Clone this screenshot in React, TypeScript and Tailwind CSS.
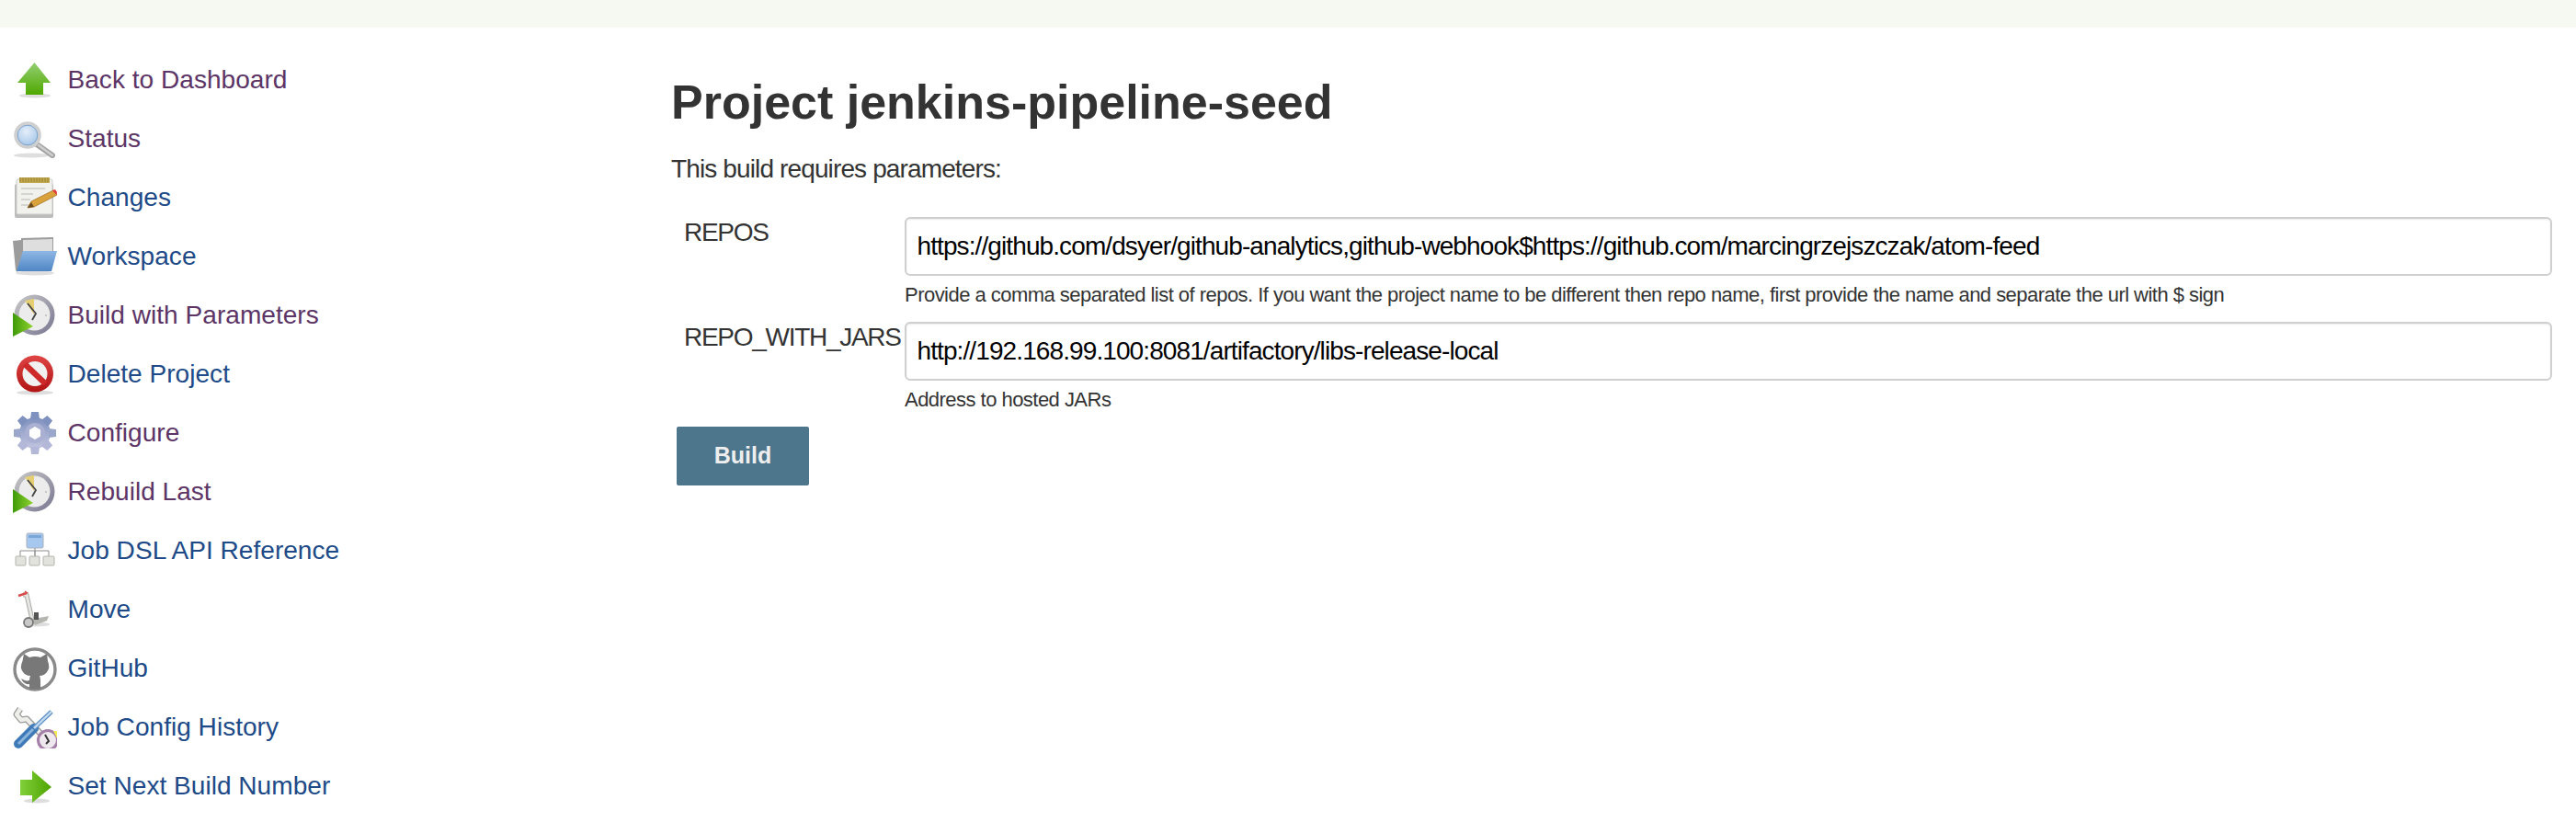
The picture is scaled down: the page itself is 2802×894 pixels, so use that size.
import type { ReactNode } from 'react'

function Shadow({ cx = 24, cy = 44, rx = 17 }: { cx?: number; cy?: number; rx?: number }) {
  return <ellipse cx={cx} cy={cy} rx={rx} ry={2.6} fill="#000" opacity={0.13} />
}

function UpArrow() {
  return (
    <svg viewBox="0 0 48 48" className="size-12">
      <defs>
        <linearGradient id="upg" x1="0" y1="0" x2="0" y2="1">
          <stop offset="0" stopColor="#93cf72" />
          <stop offset="1" stopColor="#50a800" />
        </linearGradient>
      </defs>
      <Shadow cy={42} rx={17} />
      <path d="M23.5 6 L41 28 L33 28 L33 41 L14 41 L14 28 L5 28 Z" fill="url(#upg)" />
    </svg>
  )
}

function Search() {
  return (
    <svg viewBox="0 0 48 48" className="size-12">
      <defs>
        <radialGradient id="lens" cx="0.45" cy="0.35" r="0.7">
          <stop offset="0" stopColor="#e4eef9" />
          <stop offset="1" stopColor="#9cc0e6" />
        </radialGradient>
      </defs>
      <Shadow cx={20} cy={43} rx={19} />
      <line x1="26" y1="31" x2="43" y2="43" stroke="#a3a3a3" strokeWidth="6" strokeLinecap="round" />
      <line x1="28" y1="32" x2="43" y2="43" stroke="#cfcfcf" strokeWidth="2.5" strokeLinecap="round" />
      <circle cx="16" cy="21" r="13" fill="url(#lens)" stroke="#cfcfcf" strokeWidth="3.6" />
      <circle cx="16" cy="21" r="10.8" fill="none" stroke="#7fa3cb" strokeWidth="1" />
    </svg>
  )
}

function Notepad() {
  return (
    <svg viewBox="0 0 48 48" className="size-12">
      <rect x="2" y="10" width="42" height="37" rx="2" fill="#bcbcbc" />
      <rect x="4" y="5" width="39" height="38" rx="1.5" fill="#f1f1ee" stroke="#c9c9c5" />
      <rect x="7" y="3" width="33" height="6" fill="#c2a94e" />
      <path d="M8 3v5M11 3v5M14 3v5M17 3v5M20 3v5M23 3v5M26 3v5M29 3v5M32 3v5M35 3v5M38 3v5" stroke="#8e7a30" strokeWidth="0.8" />
      <path d="M9 15h26M9 21h13M9 27h10M9 33h8" stroke="#d4d4d0" strokeWidth="2" />
      <path d="M16 36 L20 29 L44 17 L48 22 L23 35 Z" fill="#d9a23a" stroke="#a5752a" strokeWidth="0.8" />
      <path d="M43 17 L47.5 22 L48 19 L46 16 Z" fill="#e33c3c" />
      <path d="M16 36 L20 30 L23 35 Z" fill="#6a4a20" />
    </svg>
  )
}

function Folder() {
  return (
    <svg viewBox="0 0 48 48" className="size-12">
      <defs>
        <linearGradient id="fold" x1="0" y1="0" x2="0" y2="1">
          <stop offset="0" stopColor="#8eb7e4" />
          <stop offset="1" stopColor="#4f86c4" />
        </linearGradient>
      </defs>
      <Shadow cy={43} rx={21} />
      <path d="M0 8 L9 7 L9 5 L44 4 L44 22 L10 30 L5 42 L3 40 Z" fill="#9c9c9c" />
      <path d="M11 7 L43 6 L43 20 L11 20 Z" fill="#dedede" />
      <path d="M11 19 L48 19 L42 41 L4 41 Z" fill="url(#fold)" />
    </svg>
  )
}

function BuildClock({ id }: { id: string }) {
  return (
    <svg viewBox="0 0 48 48" className="size-12">
      <defs>
        <linearGradient id={id} x1="0" y1="0" x2="1" y2="0">
          <stop offset="0" stopColor="#3f9a0a" />
          <stop offset="1" stopColor="#8fd32e" />
        </linearGradient>
        <linearGradient id={`${id}-ring`} x1="0" y1="0" x2="1" y2="1">
          <stop offset="0" stopColor="#c9c9c9" />
          <stop offset="1" stopColor="#77758f" />
        </linearGradient>
      </defs>
      <circle cx="23.5" cy="24.5" r="22" fill={`url(#${id}-ring)`} />
      <circle cx="23.5" cy="24.5" r="17" fill="#ececec" />
      <path d="M23 24 L13 9 L23 7 Z" fill="#e6cf72" />
      <path d="M16 12 L25 23 L21 30" fill="none" stroke="#444" strokeWidth="1.8" />
      <circle cx="36" cy="25" r="1" fill="#bbb" />
      <path d="M0 22 L22 37 L0 48 Z" fill={`url(#${id})`} />
    </svg>
  )
}

function NoEntry() {
  return (
    <svg viewBox="0 0 48 48" className="size-12">
      <defs>
        <linearGradient id="red" x1="0" y1="0" x2="0" y2="1">
          <stop offset="0" stopColor="#e04545" />
          <stop offset="1" stopColor="#b01414" />
        </linearGradient>
      </defs>
      <Shadow cy={45} rx={20} />
      <circle cx="24" cy="24.5" r="20" fill="url(#red)" />
      <circle cx="24" cy="24.5" r="13.5" fill="#f1f1f1" />
      <line x1="13" y1="14" x2="35" y2="35" stroke="#cf2a2a" strokeWidth="6.5" />
    </svg>
  )
}

function Gear() {
  const teeth = [0, 45, 90, 135, 180, 225, 270, 315]
  return (
    <svg viewBox="0 0 48 48" className="size-12">
      <defs>
        <linearGradient id="gearg" x1="0" y1="0" x2="0" y2="1">
          <stop offset="0" stopColor="#7d90bd" />
          <stop offset="1" stopColor="#c2c5e0" />
        </linearGradient>
      </defs>
      <g transform="translate(0 1)">
        <circle cx="24" cy="24" r="17" fill="url(#gearg)" />
        {teeth.map((a) => (
          <path
            key={a}
            d="M19 9 L20 1 L28 1 L29 9 Z"
            fill={a > 90 && a < 270 ? '#b4b8d8' : a === 90 || a === 270 ? '#9aa6ca' : '#7f92bf'}
            transform={`rotate(${a} 24 24)`}
          />
        ))}
        <circle cx="24" cy="24" r="11" fill="#aab0d2" />
        <path d="M24 17 L30 20.5 L30 27.5 L24 31 L18 27.5 L18 20.5 Z" fill="#fff" />
      </g>
    </svg>
  )
}

function Hierarchy() {
  return (
    <svg viewBox="0 0 48 48" className="size-12">
      <rect x="15" y="6" width="18" height="16" rx="1.5" fill="#a6c8ee" stroke="#a9b0ba" />
      <rect x="17" y="8" width="14" height="3" fill="#7aa6d8" />
      <path d="M24 22v9M8 25v6M24 25v6M39 25v6M8 25h31" stroke="#8d8d8d" strokeWidth="1" fill="none" />
      <rect x="3" y="31" width="11" height="10" rx="1" fill="#e3e3de" stroke="#b3b3ae" />
      <rect x="18" y="31" width="11" height="10" rx="1" fill="#e3e3de" stroke="#b3b3ae" />
      <rect x="33" y="31" width="12" height="10" rx="1" fill="#e3e3de" stroke="#b3b3ae" />
    </svg>
  )
}

function Trolley() {
  return (
    <svg viewBox="0 0 48 48" className="size-12">
      <Shadow cx={27} cy={41} rx={13} />
      <path d="M11 9 L15 9 L21 36" fill="none" stroke="#a9a9a5" strokeWidth="5" />
      <path d="M11 9 L15 9 L21 36" fill="none" stroke="#e6e6e2" strokeWidth="3" />
      <path d="M6 10 L15 7" stroke="#d94a4a" strokeWidth="2.5" />
      <path d="M16 7 L13 5" stroke="#d94a4a" strokeWidth="1.5" />
      <path d="M20 35 L34 33 L39 32 L37 37 L24 42 Z" fill="#b5b5b0" />
      <rect x="23" y="28" width="5" height="8" fill="#555" />
      <circle cx="17" cy="39" r="5" fill="#c8c8c8" stroke="#777" strokeWidth="1.8" />
    </svg>
  )
}

function Octocat() {
  return (
    <svg viewBox="0 0 48 50" className="-mb-[2px] h-[50px] w-12">
      <circle cx="24" cy="26" r="22" fill="#fff" stroke="#8a8a8a" strokeWidth="3.4" />
      <path
        fill="#787878"
        d="M12 9 L18 13 Q24 11 30 13 L37 9 L38 17 Q41 24 37 29 Q34 33 29 33 Q30 35 30 38 L30 47 Q24 48 18 47 L18 42 Q12 43 9 36 L12 37.5 Q15 39 18 38 Q18 35 19 33 Q14 33 11 29 Q7 24 10.5 17 Z"
      />
    </svg>
  )
}

function Tools() {
  return (
    <svg viewBox="0 0 48 48" className="size-12">
      <path d="M8 5 L4 11 L9 17 L15 16 L36 38" fill="none" stroke="#9c9c98" strokeWidth="7" strokeLinejoin="round" />
      <path d="M8 5 L4 11 L9 17 L15 16 L36 38" fill="none" stroke="#eeeeea" strokeWidth="4.4" strokeLinejoin="round" />
      <line x1="6" y1="43" x2="23" y2="26" stroke="#3f7ab8" strokeWidth="10" strokeLinecap="round" />
      <line x1="23" y1="26" x2="42" y2="8" stroke="#5f93c8" strokeWidth="5" />
      <line x1="23" y1="26" x2="42" y2="8" stroke="#c5dbef" strokeWidth="2.4" />
      <line x1="6" y1="43" x2="22" y2="27" stroke="#8bb4dc" strokeWidth="3" />
      <circle cx="38" cy="39" r="10.5" fill="#efe9ef" stroke="#a580a8" strokeWidth="3" />
      <path d="M35 33 L39 40 L36 43" fill="none" stroke="#333" strokeWidth="2" />
      <path d="M44 29 L48 29 L48 37 Z" fill="#f4ec55" />
    </svg>
  )
}

function RightArrow() {
  return (
    <svg viewBox="0 0 48 48" className="size-12">
      <defs>
        <linearGradient id="rg" x1="0" y1="0" x2="1" y2="0">
          <stop offset="0" stopColor="#7fcf3a" />
          <stop offset="1" stopColor="#4fa400" />
        </linearGradient>
      </defs>
      <Shadow cx={26} cy={41} rx={14} />
      <path d="M8 18 L21 18 L21 8 L42 26 L21 43 L21 35 L8 35 Z" fill="url(#rg)" />
    </svg>
  )
}

const VISITED = 'text-[#5c3566]'
const LINK = 'text-[#204a87]'

const tasks: { label: string; icon: ReactNode; color: string }[] = [
  { label: 'Back to Dashboard', icon: <UpArrow />, color: VISITED },
  { label: 'Status', icon: <Search />, color: VISITED },
  { label: 'Changes', icon: <Notepad />, color: LINK },
  { label: 'Workspace', icon: <Folder />, color: LINK },
  { label: 'Build with Parameters', icon: <BuildClock id="clock1" />, color: VISITED },
  { label: 'Delete Project', icon: <NoEntry />, color: LINK },
  { label: 'Configure', icon: <Gear />, color: VISITED },
  { label: 'Rebuild Last', icon: <BuildClock id="clock2" />, color: VISITED },
  { label: 'Job DSL API Reference', icon: <Hierarchy />, color: LINK },
  { label: 'Move', icon: <Trolley />, color: LINK },
  { label: 'GitHub', icon: <Octocat />, color: LINK },
  { label: 'Job Config History', icon: <Tools />, color: LINK },
  { label: 'Set Next Build Number', icon: <RightArrow />, color: LINK },
]

const params = [
  {
    name: 'REPOS',
    value: 'https://github.com/dsyer/github-analytics,github-webhook$https://github.com/marcingrzejszczak/atom-feed',
    help: 'Provide a comma separated list of repos. If you want the project name to be different then repo name, first provide the name and separate the url with $ sign',
  },
  {
    name: 'REPO_WITH_JARS',
    value: 'http://192.168.99.100:8081/artifactory/libs-release-local',
    help: 'Address to hosted JARs',
  },
]

export default function App() {
  return (
    <div className="h-[894px] overflow-hidden bg-white font-['Liberation_Sans',Arial,sans-serif] text-[#333]">
      <div className="h-[30px] bg-[#f6f9f2]" />
      <div className="flex">
        <aside className="w-[730px] shrink-0 pt-[24px] pl-[14px]">
          {tasks.map((t) => (
            <a key={t.label} className={`flex h-[64px] items-center gap-[11.5px] text-[28.1px] ${t.color}`}>
              <span className="h-12 w-12 shrink-0 blur-[0.5px]">{t.icon}</span>
              <span className="pt-[2px]">{t.label}</span>
            </a>
          ))}
        </aside>
        <main className="min-w-0 flex-1 pr-[26px]">
          <h1 className="mt-[48px] h-[66px] text-[52px] leading-[66px] font-bold">Project jenkins-pipeline-seed</h1>
          <p className="mt-[22px] text-[28px] leading-[36px] tracking-[-0.87px]">This build requires parameters:</p>
          <div className="mt-[34px] grid grid-cols-[254px_1fr]">
            {params.map((p) => (
              <div key={p.name} className="col-span-2 grid h-[114px] grid-cols-subgrid">
                <div className="pl-[14px] text-[28px] leading-[34px] tracking-[-1.28px] whitespace-nowrap">{p.name}</div>
                <div>
                  <input
                    readOnly
                    value={p.value}
                    className="h-[64px] w-full rounded-[6px] border-[2.5px] border-[#cfcfcf] bg-white px-[11.5px] text-[28px] tracking-[-0.9px] text-black shadow-[inset_0_1px_2px_rgba(0,0,0,0.08)] outline-none"
                  />
                  <div className="mt-[8px] text-[22px] leading-[26px] tracking-[-0.53px]">{p.help}</div>
                </div>
              </div>
            ))}
          </div>
          <button className="ml-[6px] h-[64px] w-[144px] rounded-[2px] bg-[#4d758c] text-[25px] font-bold text-[#eeeeee]">
            Build
          </button>
        </main>
      </div>
    </div>
  )
}
